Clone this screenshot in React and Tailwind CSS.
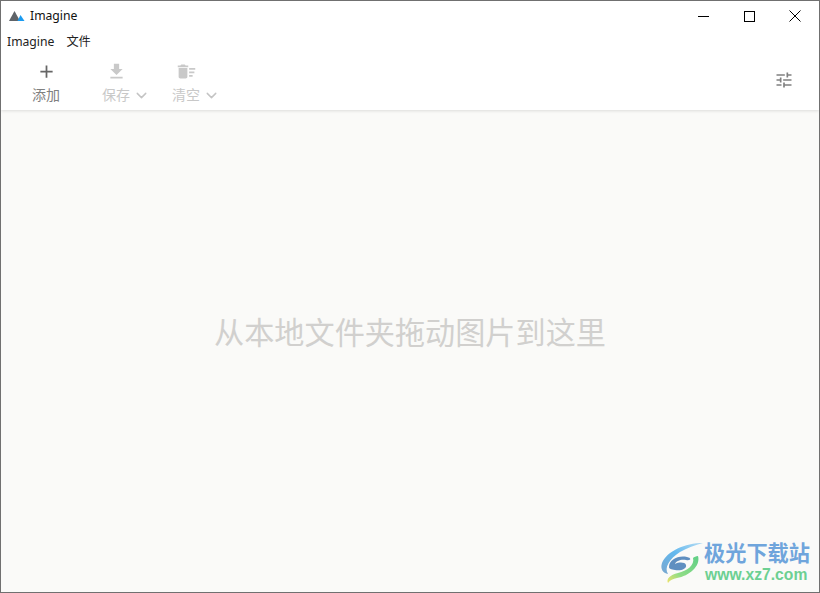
import { ChevronDown } from 'lucide-react'

function AppLogo() {
  return (
    <svg width="16" height="10" viewBox="0 0 16 10" className="block">
      <path d="M0 10 L5.5 0 L11 10 Z" fill="#5f6368" />
      <path d="M8.5 10 L11.5 4 L15.5 10 Z" fill="#1a9bf0" />
    </svg>
  )
}

// material style toolbar glyphs
function MaterialIcon({ d, color, size = 21 }) {
  return (
    <svg width={size} height={size} viewBox="0 0 24 24" fill={color} className="block">
      <path d={d} />
    </svg>
  )
}

const addPath = 'M19 13h-6v6h-2v-6H5v-2h6V5h2v6h6v2z'
const savePath = 'M19 9h-4V3H9v6H5l7 7 7-7zM5 18v2h14v-2H5z'
const clearPath = 'M15 16h4v2h-4zm0-8h7v2h-7zm0 4h6v2h-6zM3 18c0 1.1.9 2 2 2h6c1.1 0 2-.9 2-2V8H3v10zM14 5h-3l-1-1H6L5 5H2v2h12z'
const tunePath = 'M3 17v2h6v-2H3zM3 5v2h10V5H3zm10 16v-2h8v-2h-8v-2h-2v6h2zM7 9v2H3v2h4v2h2V9H7zm14 4v-2H11v2h10zm-6-4h2V7h4V5h-4V3h-2v6z'

function WatermarkLogo() {
  return (
    <svg width="44" height="42" viewBox="0 0 44 42" className="block">
      <defs>
        <linearGradient id="arcTop" x1="1" y1="0" x2="0" y2="1">
          <stop offset="0" stopColor="#b5dcf3" />
          <stop offset="0.5" stopColor="#62b8ee" />
          <stop offset="1" stopColor="#7aa7cf" />
        </linearGradient>
        <linearGradient id="arcBottom" x1="1" y1="0" x2="0" y2="1">
          <stop offset="0" stopColor="#5fcf86" />
          <stop offset="0.65" stopColor="#8fdc86" />
          <stop offset="1" stopColor="#efe36a" />
        </linearGradient>
      </defs>
      <path d="M43 1 C25 1 7 9 2 21 C0 27 3 31 8 32 C4 26 9 17 20 10 C27 6 35 3 43 1 Z" fill="url(#arcTop)" />
      <path d="M9 25 C9 18 18 13 27 15 C32 16 31 19 26 18 C21 17 16 19 15 22 C19 20 25 20 26 23 C27 27 21 29 15 28 C11 27 9 27 9 25 Z" fill="#5f8fc0" />
      <path d="M38 14 C41 24 29 34 17 36 C13 37 10 38 8 41 C6 37 10 33 18 31 C27 29 35 23 33 16 C34 15 36 14 38 14 Z" fill="url(#arcBottom)" />
    </svg>
  )
}

function ToolButton({ icon, label, disabled, menu }) {
  return (
    <div className="flex w-[28px] flex-col items-center">
      <div className="flex h-[21px] w-[21px] items-center justify-center">{icon}</div>
      <div className={`relative mt-[3px] w-[28px] whitespace-nowrap text-[14px] leading-[20px] ${disabled ? 'text-[#c8c8c8]' : 'text-[#808080]'}`}>
        {label}
        {menu && <ChevronDown size={17} strokeWidth={2} className="absolute left-full top-[2px] ml-[3px] text-[#c4c4c4]" />}
      </div>
    </div>
  )
}

export default function App() {
  return (
    <div className="relative flex h-[593px] w-[820px] flex-col overflow-hidden border border-[#707070] bg-[#fafaf8] font-['Noto_Sans','Noto_Sans_CJK_SC',sans-serif]">
      <div className="relative z-10 bg-white shadow-[0_1px_3px_rgba(0,0,0,0.12)]">
        <div className="flex h-[29px] items-center justify-between pt-[1px]">
          <div className="flex items-center gap-[5px] pl-[8px]">
            <AppLogo />
            <span className="text-[12.2px] text-[#111]">Imagine</span>
          </div>
          <div className="flex items-center pr-[1px]">
            <div className="flex w-[46px] justify-center">
              <div className="h-[1px] w-[11px] bg-black" />
            </div>
            <div className="flex w-[46px] justify-center">
              <div className="h-[11px] w-[11px] border border-black" />
            </div>
            <div className="flex w-[46px] justify-center">
              <svg width="12" height="12" viewBox="0 0 12 12" stroke="#000" strokeWidth="1" className="block">
                <path d="M0.5 0.5 L11.5 11.5 M11.5 0.5 L0.5 11.5" />
              </svg>
            </div>
          </div>
        </div>
        <div className="flex h-[24px] items-center gap-[12px] pl-[6px] pt-[1px] text-[12.2px] text-[#222]">
          <span>Imagine</span>
          <span>文件</span>
        </div>
        <div className="flex h-[56px] items-start justify-between pt-[7px]">
          <div className="flex gap-[42px] pl-[31px]">
            <ToolButton icon={<MaterialIcon d={addPath} color="#666666" />} label="添加" />
            <ToolButton icon={<MaterialIcon d={savePath} color="#c9c9c9" />} label="保存" disabled menu />
            <ToolButton icon={<MaterialIcon d={clearPath} color="#c9c9c9" />} label="清空" disabled menu />
          </div>
          <div className="mr-[25px] mt-[9px]">
            <MaterialIcon d={tunePath} color="#808080" size={20} />
          </div>
        </div>
      </div>

      <div className="flex flex-1 items-center justify-center pb-[36px]">
        <span className="text-[30.15px] leading-[40px] text-[#d1d0ce]">从本地文件夹拖动图片到这里</span>
      </div>

      <div className="absolute bottom-[7px] right-[9px] flex items-center">
        <WatermarkLogo />
        <div className="flex flex-col items-start">
          <span className="text-[21.2px] font-bold leading-[24px] text-[#6fa5dc]">极光下载站</span>
          <span className="pl-[1px] font-['Liberation_Sans',sans-serif] text-[15.7px] font-bold leading-[20px] text-[#6dd092]">www.xz7.com</span>
        </div>
      </div>
    </div>
  )
}
